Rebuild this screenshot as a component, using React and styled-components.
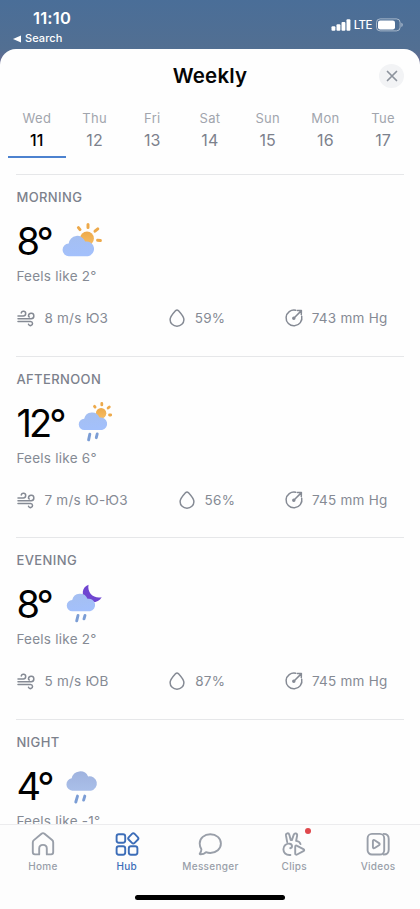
import { useState } from 'react';
import styled, { createGlobalStyle } from 'styled-components';

const days = [
  { name: 'Wed', date: 11 },
  { name: 'Thu', date: 12 },
  { name: 'Fri', date: 13 },
  { name: 'Sat', date: 14 },
  { name: 'Sun', date: 15 },
  { name: 'Mon', date: 16 },
  { name: 'Tue', date: 17 },
];

const periods = [
  { title: 'MORNING', temp: '8°', feels: '2°', icon: SunCloud, wind: '8 m/s ЮЗ', humidity: '59%', pressure: '743 mm Hg' },
  { title: 'AFTERNOON', temp: '12°', feels: '6°', icon: SunRain, wind: '7 m/s Ю-ЮЗ', humidity: '56%', pressure: '745 mm Hg' },
  { title: 'EVENING', temp: '8°', feels: '2°', icon: MoonRain, wind: '5 m/s ЮВ', humidity: '87%', pressure: '745 mm Hg' },
  { title: 'NIGHT', temp: '4°', feels: '-1°', icon: Rain },
];

const menu = [
  { name: 'Home', icon: HomeIcon },
  { name: 'Hub', icon: HubIcon },
  { name: 'Messenger', icon: MessengerIcon },
  { name: 'Clips', icon: ClipsIcon, badge: true },
  { name: 'Videos', icon: VideosIcon },
];

function App() {
  const [selected, setSelected] = useState(11);
  const [page, setPage] = useState('Hub');

  return (
    <>
      <GlobalStyle />
      <Screen>
        <StatusBar>
          <div>
            <Time>11:10</Time>
            <Back>
              <svg width="8" height="8" viewBox="0 0 8 8">
                <path d="M8 .6v6.8L0 4z" fill="#fff" />
              </svg>
              Search
            </Back>
          </div>
          <Signal>
            <svg width="20" height="12" viewBox="0 0 20 12" fill="#fff">
              <rect x="0.5" y="7.2" width="3.9" height="4.6" rx="1" />
              <rect x="5.5" y="5.2" width="3.9" height="6.6" rx="1" />
              <rect x="10.5" y="2.9" width="3.9" height="8.9" rx="1" />
              <rect x="15.5" y="0.2" width="3.9" height="11.6" rx="1" />
            </svg>
            <span>LTE</span>
            <svg width="28" height="14" viewBox="0 0 28 14">
              <rect x="0.5" y="0.9" width="23.6" height="12" rx="3.6" fill="none" stroke="#fff" strokeOpacity="0.5" />
              <rect x="2" y="2.4" width="17" height="9" rx="2.2" fill="#fff" />
              <path d="M25.4 4.8c1.8.6 1.8 3.6 0 4.2z" fill="#fff" fillOpacity="0.55" />
            </svg>
          </Signal>
        </StatusBar>
        <Sheet>
          <Header>
            <Title>Weekly</Title>
            <CloseButton aria-label="Close">
              <svg width="12" height="12" viewBox="0 0 12 12">
                <path d="M1.5 1.5l9 9M10.5 1.5l-9 9" stroke="#8d939d" strokeWidth="1.7" strokeLinecap="round" />
              </svg>
            </CloseButton>
          </Header>
          <Days>
            {days.map(({ name, date }) => (
              <Day key={date} $active={date === selected} onClick={() => setSelected(date)}>
                <span>{name}</span>
                <strong>{date}</strong>
              </Day>
            ))}
          </Days>
          <Forecast>
            {periods.map(({ title, temp, feels, icon: Icon, wind, humidity, pressure }) => (
              <Period key={title}>
                <PeriodTitle>{title}</PeriodTitle>
                <Weather>
                  <Temp>{temp}</Temp>
                  <Icon />
                </Weather>
                <Feels>Feels like {feels}</Feels>
                {wind && (
                  <Metrics>
                    <Metric>
                      <WindIcon />
                      {wind}
                    </Metric>
                    <Metric>
                      <DropIcon />
                      {humidity}
                    </Metric>
                    <Metric>
                      <GaugeIcon />
                      {pressure}
                    </Metric>
                  </Metrics>
                )}
              </Period>
            ))}
          </Forecast>
        </Sheet>
        <TabBar>
          <Tabs>
            {menu.map(({ name, icon: Icon, badge }) => (
              <Tab key={name} $active={name === page} onClick={() => setPage(name)}>
                <Icon />
                {name}
                {badge && <Badge />}
              </Tab>
            ))}
          </Tabs>
          <HomeIndicator />
        </TabBar>
      </Screen>
    </>
  );
}

export default App;

function SkyGradients({ id }) {
  return (
    <defs>
      <linearGradient id={`${id}-cloud`} x1="0" y1="0" x2="0.2" y2="1">
        <stop offset="0" stopColor="#a5bff0" />
        <stop offset="1" stopColor="#a3c0fb" />
      </linearGradient>
      <linearGradient id={`${id}-sun`} x1="0" y1="0" x2="0" y2="1">
        <stop offset="0" stopColor="#eda94a" />
        <stop offset="1" stopColor="#f6bd63" />
      </linearGradient>
    </defs>
  );
}

function SunCloud() {
  return (
    <WeatherIcon viewBox="0 0 48 48">
      <SkyGradients id="morning" />
      <circle cx="27" cy="21.5" r="6.9" fill="url(#morning-sun)" />
      <path
        d="M28 7.4v3M18.4 10.6l1.6 2M35 14.2l2.8-2.3M37.6 23.2l2.8.4"
        stroke="#eda94a"
        strokeWidth="3"
        strokeLinecap="round"
      />
      <path
        d="M9 39.200a6.300 6.300 0 0 1-.3-12.600A8.500 8.500 0 0 1 25.200 24.600 7.400 7.400 0 0 1 28 39.200z"
        fill="url(#morning-cloud)"
      />
    </WeatherIcon>
  );
}

function SunRain() {
  return (
    <WeatherIcon viewBox="0.5 0 48 48">
      <SkyGradients id="afternoon" />
      <circle cx="28.6" cy="14.3" r="5.2" fill="url(#afternoon-sun)" />
      <path
        d="M29.3 4.5v1.4M22 7.3l.6.8M35.6 9l1.2-1M37 16h1.2"
        stroke="#eda94a"
        strokeWidth="2.8"
        strokeLinecap="round"
      />
      <path
        d="M12 31a5.600 5.600 0 0 1-.3-11.200A8 8 0 0 1 27 18.600 6.300 6.300 0 0 1 29.600 31z"
        fill="url(#afternoon-cloud)"
      />
      <path d="M17.3 35.2l-1.2 5.7M24.7 35l-.9 3.700" stroke="#7b9dd5" strokeWidth="2.9" strokeLinecap="round" />
    </WeatherIcon>
  );
}

function MoonRain() {
  return (
    <WeatherIcon viewBox="0 0 48 48">
      <SkyGradients id="evening" />
      <path d="M28.5 4.7C21.5 7.5 21.5 15 25.5 19.5c4.500 4 13 3.600 16.200-2.300C34 19 27 13 28.5 4.700z" fill="#6f45d0" />
      <path
        d="M12.500 31.200a5.600 5.600 0 0 1-.3-11.200A8 8 0 0 1 27.500 18.800 6.300 6.300 0 0 1 30.100 31.200z"
        fill="url(#evening-cloud)"
      />
      <path d="M18 35.5l-1.3 5.3M25 35.4l-1 3.4" stroke="#7b9dd5" strokeWidth="2.9" strokeLinecap="round" />
    </WeatherIcon>
  );
}

function Rain() {
  return (
    <WeatherIcon viewBox="2.5 0 48 48">
      <defs>
        <linearGradient id="night-cloud" x1="0" y1="0" x2="0" y2="1">
          <stop offset="0" stopColor="#9fb3df" />
          <stop offset="1" stopColor="#aabfe9" />
        </linearGradient>
      </defs>
      <path
        d="M13.8 28.700a6.300 6.300 0 0 1-.6-12.500A8.700 8.700 0 0 1 29.600 14.400 7.200 7.200 0 0 1 32.500 28.700z"
        fill="url(#night-cloud)"
      />
      <path d="M19 34.1l-1.700 5.900M26.300 34.100l-1.200 4" stroke="#7b9dd5" strokeWidth="2.9" strokeLinecap="round" />
    </WeatherIcon>
  );
}

function WindIcon() {
  return (
    <MetricIcon viewBox="0 0 20 20">
      <path d="M2 7.9h5.400a2.300 2.300 0 1 0-2.200-3M2 10.700h13.200a2.700 2.700 0 1 0-2.700-3.200c-.1 1 .4 1.500.9 1.500M2 13.400h12.500a2.100 2.100 0 1 1-2 2.900" />
    </MetricIcon>
  );
}

function DropIcon() {
  return (
    <MetricIcon viewBox="0 0 20 20">
      <path d="M10 1.900c.5 0 .9.300 1.300.7 2.200 2.400 5.600 5.700 5.600 9.100a6.900 6.500 0 0 1-13.800 0c0-3.400 3.400-6.700 5.600-9.100.4-.4.8-.7 1.300-.7z" />
    </MetricIcon>
  );
}

function GaugeIcon() {
  return (
    <MetricIcon viewBox="0 0 20 20">
      <path d="M11.7 2.200a7.900 7.900 0 1 0 6 6M9.800 10.200l6.600-6.600M13.400 2.600l4-.1-.1 4" />
      <circle cx="9.8" cy="10.2" r="1" fill="currentColor" />
    </MetricIcon>
  );
}

function HomeIcon() {
  return (
    <TabIcon viewBox="0 0 28 28">
      <path d="M3.800 12.400c0-1 .4-1.700 1.100-2.300l7.600-6.400c.9-.7 2.100-.7 3 0l7.600 6.400c.7.6 1.100 1.300 1.100 2.300v9.900c0 1.300-.8 2.100-2.100 2.100h-4.300v-5.900c0-2.100-1.500-3.600-3.800-3.600s-3.800 1.500-3.800 3.600v5.900H5.900c-1.300 0-2.100-.8-2.100-2.100z" />
    </TabIcon>
  );
}

function HubIcon() {
  return (
    <TabIcon viewBox="0 0 28 28">
      <rect x="3.6" y="4.2" width="8.6" height="8.6" rx="2.2" />
      <rect x="3.6" y="16.2" width="8.6" height="8.6" rx="2.2" />
      <rect x="15.8" y="16.2" width="8.6" height="8.6" rx="2.2" />
      <rect x="16.2" y="4.3" width="8.2" height="8.2" rx="1.9" transform="rotate(45 20.3 8.4)" />
    </TabIcon>
  );
}

function MessengerIcon() {
  return (
    <TabIcon viewBox="0 0 28 28">
      <path d="M14.3 4.200c6 0 10.600 4.100 10.600 9.400s-4.600 9.400-10.600 9.400c-1.600 0-3-.3-4.300-.8-1.500 1.400-3.600 2.200-5.700 2.100-.6 0-.8-.6-.4-1 1-1.200 1.500-2.500 1.500-4-1.100-1.600-1.700-3.500-1.700-5.700 0-5.300 4.600-9.400 10.600-9.400z" />
    </TabIcon>
  );
}

function ClipsIcon() {
  return (
    <TabIcon viewBox="0 0 28 28">
      <path d="M7.200 12.200L6 5.700c-.4-2.700 2.700-3.300 3.400-.8l1.300 5.200h1.200l1.800-5.200c.9-2.500 3.900-1.600 3.400.9l-1 5.100c2.300.3 4 1.500 4.400 3.200" />
      <path d="M10.200 18.200c2.400-.4 2.600-4.100-.6-4.500-3.300-.4-6.200 1.900-6.200 5.600 0 3.400 2.600 5.800 6.200 5.700h.8" />
      <path d="M15.200 16.900c0-1.200.9-1.700 1.900-1.100l6.300 3.300c1.100.6 1.100 1.500 0 2.100l-6.300 3.300c-1 .5-1.900 0-1.900-1.100z" />
    </TabIcon>
  );
}

function VideosIcon() {
  return (
    <TabIcon viewBox="0 0 28 28">
      <rect x="3.6" y="3.9" width="16.6" height="20.6" rx="4.3" />
      <path d="M19.5 3.900c3.600 0 5.200 1.500 5.200 4.800v11c0 3.300-1.600 4.800-5.200 4.800" />
      <path d="M8.900 11.300c0-1.200.8-1.600 1.800-1l4.300 2.800c.9.600.9 1.500 0 2.100l-4.300 2.800c-1 .6-1.800.2-1.800-1z" />
    </TabIcon>
  );
}

const GlobalStyle = createGlobalStyle`
  * {
    box-sizing: border-box;
  }

  body {
    margin: 0;
  }

  h1, h2, p, ul {
    margin: 0;
    padding: 0;
  }

  button {
    padding: 0;
    border: none;
    background: none;
    color: inherit;
    font: inherit;
  }
`;

const Screen = styled.div`
  display: flex;
  flex-direction: column;
  overflow: hidden;
  width: 420px;
  height: 909px;
  background: linear-gradient(to bottom, #4a6e98 0, #526f92 49px, #6c6a91 65px);
  font-family: Inter, 'Noto Sans', sans-serif;
`;

const StatusBar = styled.header`
  display: flex;
  flex: none;
  justify-content: space-between;
  height: 49px;
  padding: 9px 16px 0 13px;
  color: #fff;
`;

const Time = styled.div`
  padding-left: 20px;
  font-weight: 600;
  font-size: 16.5px;
  line-height: 19px;
  letter-spacing: 0.2px;
`;

const Back = styled.div`
  display: flex;
  align-items: center;
  gap: 4px;
  margin-top: 3px;
  font-weight: 500;
  font-size: 11px;
  line-height: 15px;
  letter-spacing: 0.1px;
`;

const Signal = styled.div`
  display: flex;
  align-items: center;
  height: 14px;
  margin-top: 9px;

  > span {
    margin: 0 4px 0 3px;
    font-weight: 500;
    font-size: 11.5px;
    letter-spacing: -0.5px;
  }
`;

const Sheet = styled.main`
  display: flex;
  flex: 1;
  flex-direction: column;
  min-height: 0;
  border-radius: 16px 16px 0 0;
  background-color: #fefefe;
`;

const Header = styled.div`
  display: grid;
  grid-template-columns: 24px 1fr 24px;
  align-items: center;
  flex: none;
  height: 53px;
  padding: 0 17px;
`;

const Title = styled.h1`
  grid-column: 2;
  color: #050505;
  font-weight: 600;
  font-size: 20.5px;
  line-height: 24px;
  text-align: center;
  letter-spacing: 0.2px;
`;

const CloseButton = styled.button`
  display: flex;
  align-items: center;
  justify-content: center;
  width: 25px;
  height: 24px;
  border-radius: 50%;
  background-color: #f2f3f5;
`;

const Days = styled.nav`
  display: grid;
  grid-template-columns: repeat(7, 1fr);
  flex: none;
  height: 56px;
  padding: 0 8px;
`;

const Day = styled.button`
  display: flex;
  flex-direction: column;
  align-items: center;
  padding-top: 7px;
  border-bottom: 2px solid ${({ $active }) => ($active ? '#4c82cf' : 'transparent')};

  > span {
    color: #a1a5ad;
    font-size: 13px;
    line-height: 18px;
    letter-spacing: 0.3px;
  }

  > strong {
    margin-top: 3px;
    color: ${({ $active }) => ($active ? '#000' : '#7c818c')};
    font-weight: ${({ $active }) => ($active ? 500 : 400)};
    font-size: 16px;
    line-height: 20px;
    letter-spacing: 0.2px;
  }
`;

const Forecast = styled.div`
  flex: 1;
  overflow: hidden;
  min-height: 0;
  padding: 16px 16px 0;
`;

const Period = styled.section`
  height: 181.6px;
  padding-top: 13px;
  padding-left: 0.4px;
  border-top: 1px solid #e6e7e9;
`;

const PeriodTitle = styled.h2`
  color: #7c818c;
  font-weight: 500;
  font-size: 13px;
  line-height: 18px;
  letter-spacing: 0.4px;
`;

const Weather = styled.div`
  display: flex;
  align-items: center;
  gap: 9px;
  height: 48px;
  margin-top: 11px;
`;

const Temp = styled.span`
  color: #000;
  font-size: 38px;
  line-height: 48px;
  letter-spacing: -2.9px;
`;

const WeatherIcon = styled.svg`
  flex: none;
  width: 48px;
  height: 48px;
  fill: none;
`;

const Feels = styled.p`
  margin-top: 2px;
  color: #858a94;
  font-size: 13.5px;
  line-height: 18px;
  letter-spacing: 0.25px;
`;

const Metrics = styled.div`
  display: flex;
  justify-content: space-between;
  margin-top: 23px;
  padding-right: 16.5px;
`;

const Metric = styled.div`
  display: flex;
  align-items: center;
  gap: 8px;
  height: 20px;
  color: #858a94;
  font-size: 13.5px;
  letter-spacing: 0.25px;
`;

const MetricIcon = styled.svg`
  width: 20px;
  height: 20px;
  fill: none;
  stroke: currentColor;
  stroke-width: 1.5;
  stroke-linecap: round;
  stroke-linejoin: round;
`;

const TabBar = styled.footer`
  display: flex;
  flex: none;
  flex-direction: column;
  align-items: center;
  height: 85px;
  border-top: 1px solid #ececee;
  background-color: #fdfdfd;
`;

const Tabs = styled.div`
  display: grid;
  grid-template-columns: repeat(5, 1fr);
  width: 420px;
  height: 70px;
  padding-left: 1px;
`;

const Tab = styled.button`
  display: flex;
  flex-direction: column;
  align-items: center;
  position: relative;
  padding-top: 5px;
  color: ${({ $active }) => ($active ? '#3c6db8' : '#999fa9')};
  font-weight: 500;
  font-size: 10px;
  line-height: 14px;
  letter-spacing: 0.3px;
`;

const TabIcon = styled.svg`
  width: 28px;
  height: 28px;
  margin-bottom: 1px;
  fill: none;
  stroke: currentColor;
  stroke-width: 1.9;
  stroke-linecap: round;
  stroke-linejoin: round;
`;

const Badge = styled.i`
  position: absolute;
  top: 3px;
  right: 25.5px;
  width: 6px;
  height: 6px;
  border-radius: 50%;
  background-color: #e0484c;
`;

const HomeIndicator = styled.div`
  width: 150px;
  height: 5px;
  border-radius: 3px;
  background-color: #000;
`;
